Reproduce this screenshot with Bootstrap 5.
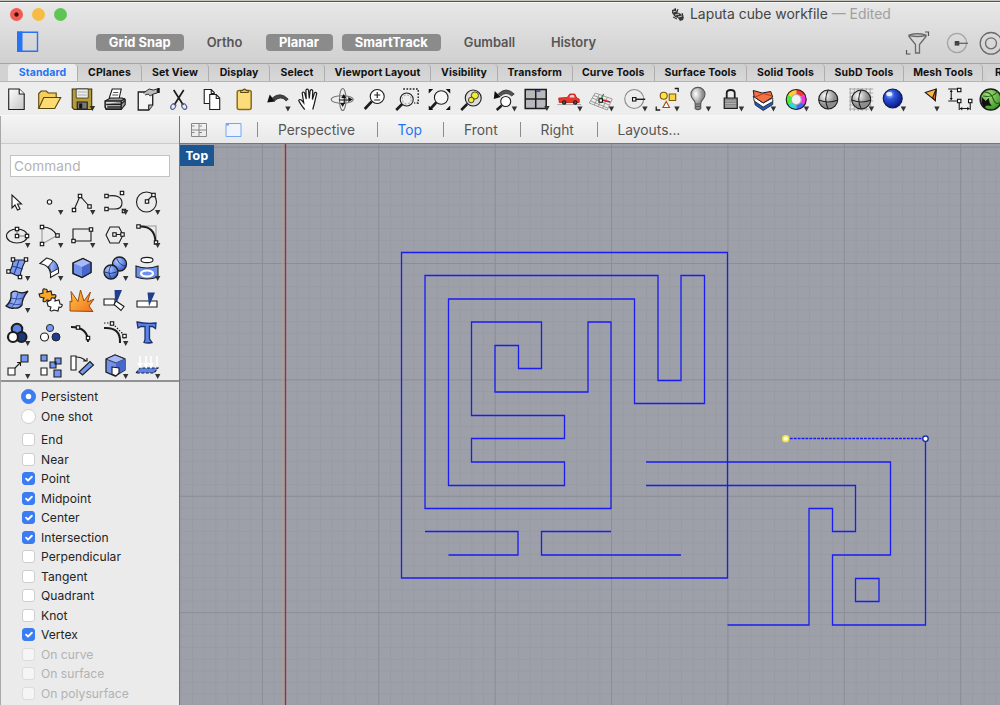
<!DOCTYPE html>
<html lang="en">
<head>
<meta charset="utf-8">
<meta name="viewport" content="width=device-width, initial-scale=1">
<title>Laputa cube workfile</title>
<link rel="stylesheet" href="https://cdn.jsdelivr.net/npm/bootstrap@5.3.0/dist/css/bootstrap.min.css">
<style>
body{font-family:Inter,"Liberation Sans",sans-serif;background:#ebebeb;color:#242424;height:705px;width:1000px}
.topedge{height:3px;background:linear-gradient(#c4c6bd 0 1px,#55574f 1px 2px,#f4f4f4 2px)}
.win-head{height:60px;background:linear-gradient(#e7e7e7,#d0d0d0)}
.win-side{width:650px}
.lights{height:22px;padding-left:9.5px;gap:9px}
.light{width:13px;height:13px;border-radius:50%}
.l-red{background:radial-gradient(#4b0c08 0 1.7px,#ee5c54 2.6px)}
.l-yel{background:#f5bd45}.l-grn{background:#5fc454}
.switches{display:grid;grid-template-columns:79.5px 87.5px 82px 67px 9px 99.5px 97px 71px;height:34px;align-items:center;font-size:12.9px;font-weight:600;color:#565656;text-align:center;padding-left:16.5px;white-space:nowrap}
.switches span{height:17px;line-height:17px}
.switches .lit{background:#8b8b8b;color:#fff;border-radius:4px;font-weight:700}
.titletext{font-size:13.9px;color:#454545;height:23px;padding-left:20px}
.titletext small{font-size:13.9px;color:#a0a0a0}
.tabstrip{height:19px;background:#d2d2d2;border-top:1px solid #a4a4a4;border-bottom:1px solid #b4b4b4;display:grid;grid-template-columns:8px 70px 64px 67px 61px 55px 106px 67px 74.5px 82.5px 92px 78px 79px 79px 40px;overflow:hidden;font-size:10.5px;font-weight:700;letter-spacing:.1px;line-height:17px;color:#111;white-space:nowrap}
.tabstrip a{color:#111;text-decoration:none;text-align:center;border-right:1.5px solid #adadad;border-radius:0 4px 0 0;background:linear-gradient(#cfcfcf,#d8d8d8);height:17px}
.tabstrip a.on{color:#2374f5;background:#ececec;border-radius:4px 4px 0 0;height:18px}
.tools{height:34px;background:#ededed;padding:1.5px 0 0 .3px;overflow:hidden;border-bottom:1px solid #f8f8f8}
.tools>svg,.palette>svg{fill:none;stroke:#1c1c1c;stroke-width:1.1;overflow:visible}
.tools>svg{width:32.45px;height:32px;flex:none}
.main-row{height:589px}
.sidebar{width:180px;border-right:1.5px solid #777;border-left:1px solid #a8a8a8;background:#ebebeb}
.side-head{height:28px;background:linear-gradient(#f4f4f4,#e6e6e6);border-bottom:1px solid #cacaca}
.cmd{margin:11px 9px 0 9px;width:160px;height:22px;border:1px solid #c3c3c3;border-radius:0;font-size:13.6px;padding:0 3px;background:#fff;letter-spacing:.1px}
.cmd::placeholder{color:#b2b2b2;opacity:1}
.palette{display:grid;grid-template-columns:repeat(5,32.5px);grid-auto-rows:32.7px;height:205px;padding-top:9.2px;border-bottom:2px solid #929292;overflow:hidden}
.palette>svg{width:32.5px;height:32.5px}
.snaps{font-size:12.1px;letter-spacing:.02px;line-height:19.5px;padding:5.2px 0 0 20px}
.snaps .row-i{height:19.5px;gap:5px}
.snaps .boxcol{width:15px;display:flex;justify-content:center;flex:none}
.snaps input{float:none;margin:0!important;border:1px solid #cecece;box-shadow:none!important;flex:none;min-height:0}
.snaps input[type=radio]{width:15px;height:15px}
.snaps input[type=radio]:checked{background-size:11px}
.snaps input[type=checkbox]{width:13px;height:13px;border-radius:3px}
.snaps input[type=checkbox]:checked{background-size:12.5px}
.snaps .form-check-input:checked{background-color:#3a7cf2;border-color:#3a7cf2}
.snaps .off{color:#b2b2b2}.snaps .off input{opacity:.5}
.viewnav{height:28px;background:linear-gradient(#f6f6f6,#e8e8e8);border-bottom:1.5px solid #777;display:grid;grid-template-columns:10px 35px 32px 21px 98.500px 21px 45.500px 21px 56px 20.500px 56.500px 20.500px 90px;align-items:center;font-size:13.8px;color:#565656;line-height:26px;white-space:nowrap}
.viewnav i{width:1.3px;height:15px;background:#8d8d8d}
.viewnav .cur{color:#2374f5}
.stage{height:561px;background:#9da0a8}
.stage svg{display:block}
.vp-tag{position:absolute;left:0;top:1px;width:34px;height:21px;font:700 12.8px/21px "Noto Sans",sans-serif;color:#fff;background:#1b5592;text-align:center}
</style>
<script src="https://cdn.jsdelivr.net/npm/bootstrap@5.3.0/dist/js/bootstrap.bundle.min.js"></script>
</head>
<body class="overflow-hidden">
<svg width="0" height="0" class="position-absolute"><defs>
<path id="dd" d="M0 0h5.400L2.700 5z" fill="#333" stroke="none"/>
<rect id="n" x="-1.700" y="-1.700" width="3.400" height="3.400" fill="#fff" stroke="#111" stroke-width="1.100"/>
<radialGradient id="gs" cx=".35" cy=".3"><stop offset="0" stop-color="#fff"/><stop offset="1" stop-color="#8c8c8c"/></radialGradient>
<radialGradient id="bs" cx=".35" cy=".3" r=".7"><stop offset="0" stop-color="#b9ccff"/><stop offset=".35" stop-color="#2f56dd"/><stop offset="1" stop-color="#0a1a80"/></radialGradient>
<radialGradient id="ls" cx=".35" cy=".3" r=".8"><stop offset="0" stop-color="#b5c8fc"/><stop offset=".5" stop-color="#6d8fe6"/><stop offset="1" stop-color="#274bb4"/></radialGradient>
<radialGradient id="gn" cx=".4" cy=".3" r=".8"><stop offset="0" stop-color="#a5e07a"/><stop offset="1" stop-color="#2f8a1a"/></radialGradient>
<linearGradient id="pg" x2="1" y2="1"><stop offset="0" stop-color="#fff"/><stop offset="1" stop-color="#c4c4c4"/></linearGradient>
<linearGradient id="bl" x2="1"><stop offset="0" stop-color="#3c62d2"/><stop offset=".35" stop-color="#9db3f5"/><stop offset="1" stop-color="#4a6fdc"/></linearGradient>
<linearGradient id="fire" y2="1"><stop offset="0" stop-color="#ffc845"/><stop offset="1" stop-color="#ef701f"/></linearGradient>
</defs></svg>

<div class="topedge"></div>
<header class="win-head d-flex">
  <div class="win-side">
    <div class="lights d-flex align-items-center"><span class="light l-red"></span><span class="light l-yel"></span><span class="light l-grn"></span></div>
    <div class="switches">
      <svg width="22" height="22" viewBox="0 0 22 22"><path d="M0 .5h5.500v20.500H0z" fill="#2673f4"/><path d="M.7 1.200h19.800v19H.7z" fill="none" stroke="#2673f4" stroke-width="1.400"/></svg>
      <span class="lit">Grid Snap</span><span>Ortho</span><span class="lit">Planar</span><b></b><span class="lit">SmartTrack</span><span>Gumball</span><span>History</span>
    </div>
  </div>
  <div class="flex-grow-1 overflow-hidden">
    <div class="titletext d-flex align-items-center gap-1">
      <svg width="16" height="16" viewBox="0 0 16 16"><path d="M2 3l3-1 2 3 4 2 3 3-1 3-3 1-2-3-3-1-3-4z" fill="#3a3a3a"/><path d="M3 5l3-1M5 8l4-1M8 10l4-1" stroke="#ccc"/><path d="M5 1l1 3M8 2l-1 3M3 10l4 2M12 6l1 3" stroke="#222"/></svg>
      <span class="text-nowrap">Laputa cube workfile <small>— Edited</small></span>
    </div>
    <svg class="d-block" width="350" height="30" viewBox="650 25 350 30" fill="none" stroke="#6a6a6a" stroke-width="1.300">
      <path d="M909 34q8.500-2.500 17 0v1.500l-6.500 8v8.500h-4v-8.500L909 35.500zM909.500 34.500q8 2 16 0" /><path d="M925 31h3.500v4M906.500 49v4h4" stroke="#555" stroke-width="1.200"/>
      <circle cx="957" cy="42" r="9.600" stroke="#a3a3a3"/><path d="M957 42.300h11" stroke="#666"/><path d="M954.700 40h4.600v4.600h-4.600z" fill="#444" stroke="none"/>
      <circle cx="991" cy="42.300" r="10.800"/><circle cx="991" cy="42.300" r="5.500"/>
    </svg>
  </div>
</header>

<nav class="tabstrip"><span></span><a class="on">Standard</a><a>CPlanes</a><a>Set View</a><a>Display</a><a>Select</a><a>Viewport Layout</a><a>Visibility</a><a>Transform</a><a>Curve Tools</a><a>Surface Tools</a><a>Solid Tools</a><a>SubD Tools</a><a>Mesh Tools</a><a class="text-start ps-2 ms-1">Render</a></nav>

<div class="tools d-flex">
<svg viewBox="0 0 32 32"><path d="M8.500 5h10.500l5 5v15.500H8.500z" fill="url(#pg)"/><path d="M19 5v5h5" fill="#fff"/></svg>
<svg viewBox="0 0 32 32"><path d="M5.500 24V9.500l2.500-2.500h5l2 2h8v4" fill="#f5cf5c" stroke="#5a430b"/><path d="M5.500 24.500l5-11h17l-6 11z" fill="#fbdb72" stroke="#5a430b"/></svg>
<svg viewBox="0 0 32 32"><path d="M7 5h19.500v20.500H9l-2-2z" fill="#b49d38" stroke="#3a3210"/><path d="M11 5h12v9H11z" fill="#eee" stroke-width=".7"/><path d="M12.500 8h9M12.500 11h9" stroke="#aaa"/><path d="M12 18h10v7H12z" fill="#777"/><path d="M14 19.500h3v5h-3z" fill="#111" stroke="none"/><use href="#dd" x="24.500" y="22"/></svg>
<svg viewBox="0 0 32 32"><path d="M11 14l3-9h9l-2 9" fill="#fff"/><path d="M15 8.500h5M14 11h6" stroke="#555"/><path d="M7 17l5-3h12l3 1.500v5l-4 5H8l-1-2z" fill="#999"/><path d="M7 17h16v8H8l-1-2zM23 17l4-2.500M8 20.500h14l5-4M9 23h14" fill="#ddd" stroke-width="1.300"/></svg>
<svg viewBox="0 0 32 32"><path d="M8 8h14.500v13l-4 5H8z" fill="#f4f4f4" stroke-width="1.300"/><path d="M22.500 21h-4v5" fill="#bbb"/><path d="M13 9l6-4 4 1 4-1v4l-4 1-3 2-2-2-3 1" fill="#bbb" stroke-width=".9"/><path d="M27 4h2.500v5H27z" fill="#111" stroke="none"/></svg>
<svg viewBox="0 0 32 32"><path d="M11.500 6l9.500 15M21.500 6L12 21" stroke-width="1.700"/><ellipse cx="11" cy="22.500" rx="2.200" ry="3" stroke="#4c5b95" transform="rotate(35 11 22.500)"/><ellipse cx="22" cy="22.500" rx="2.200" ry="3" stroke="#4c5b95" transform="rotate(-35 22 22.500)"/></svg>
<svg viewBox="0 0 32 32"><path d="M9 5.500h7l3 3v11H9z" fill="#fff"/><path d="M14.500 10.500h6.500l3.500 3.500v11.500h-10z" fill="#fff"/><path d="M21 10.500v4h3.500M16 5.500v4h3"/></svg>
<svg viewBox="0 0 32 32"><rect x="10" y="6.500" width="14" height="19" rx="2" fill="#fbdd7c" stroke="#8c6b16" stroke-width="1.500"/><path d="M13.500 8.500V6.500h2a1.800 1.800 0 013.500 0h2v2z" fill="#e7c45a" stroke="#5c470f"/></svg>
<svg viewBox="0 0 32 32"><path d="M7 18.500l2.500-8 5.500 7z" fill="#111" stroke="none"/><path d="M12 14q8-7 16 1l-2 2q-5-6-12 0z" fill="#444" stroke="#222" stroke-width=".7"/><use href="#dd" x="25" y="22.500"/></svg>
<svg viewBox="0 0 32 32"><path d="M12.500 25.500Q8 20 6.500 16.500q1-2 3 0l2 2.500-1.500-10q1-2 2.500 0l1.500 6-.3-9q1.300-1.800 2.600 0l.7 8.500 1-8q1.300-1.700 2.500 0l-.3 9 2-6.500q1.500-1.500 2.300.5L22 20l-1.500 5.500" fill="#fff" stroke-width="1.200"/></svg>
<svg viewBox="0 0 32 32"><ellipse cx="17" cy="15.500" rx="11" ry="3.800" stroke="#777"/><ellipse cx="17.500" cy="15.500" rx="3.300" ry="11" stroke="#777"/><path d="M14 16h9M19 12v8" stroke="#111"/><path d="M18.500 10l-2.500 4h5zM23 13v5l4.500-2.500zM15 19l2.500 4 2-4z" fill="#111" stroke="none"/></svg>
<svg viewBox="0 0 32 32"><circle cx="20" cy="12.500" r="7" fill="#fff"/><path d="M14.500 17.500L7.500 25" stroke-width="2.600"/><path d="M17 11h6M20 8v6M17 16h6"/></svg>
<svg viewBox="0 0 32 32"><path d="M13 5h15v14h-4" stroke-dasharray="1.700 1.500" stroke-width="1.400"/><circle cx="16.500" cy="15.500" r="6.500" fill="#eee"/><circle cx="16.500" cy="15.500" r="4.500" stroke-dasharray="2 1.500" stroke="#aaa"/><path d="M12 20l-6 6" stroke-width="2.600"/></svg>
<svg viewBox="0 0 32 32"><circle cx="19" cy="13.500" r="6.800" fill="#f6f6f6"/><path d="M14 18.500L8 25" stroke-width="2.600"/><path d="M6.500 9.500V5H11zM28 9.500V5h-4.500zM6.500 21.500V26H11zM28 21.500V26h-4.500z" fill="#111" stroke="none"/></svg>
<svg viewBox="0 0 32 32"><circle cx="19" cy="14" r="8" fill="#ddd"/><path d="M13 20l-6 6" stroke-width="2.600"/><circle cx="20.700" cy="11.500" r="3.600" fill="#f3ea33" stroke-width=".8"/><circle cx="17" cy="16" r="2.800" fill="#f3ea33" stroke-width=".8"/></svg>
<svg viewBox="0 0 32 32"><circle cx="18.500" cy="17.500" r="5" fill="#fff"/><path d="M14.500 21.500L9.500 26" stroke-width="2.400"/><path d="M6.500 15l1-8 6 6z" fill="#111" stroke="none"/><path d="M11 10q8-8 16 0l-2.500 2q-6-5-11 0z" fill="#555" stroke="#222" stroke-width=".7"/><use href="#dd" x="24.500" y="22.500"/></svg>
<svg viewBox="0 0 32 32"><path d="M6 5.500h21v19H6z" fill="#b9b9bd" stroke-width="1.500"/><path d="M16.500 5v20M6 15h21" stroke-width="1.500"/><path d="M17.200 6.300h4v1.500h-4z" fill="#2940a0" stroke="none"/><use href="#dd" x="25" y="22"/></svg>
<svg viewBox="0 0 32 32"><path d="M5 20.500h24" stroke="#aaa"/><path d="M6.500 14l8.500-.5 2.500-3.500h5l2 4 2.500 1v3.500H7z" fill="#ee3328" stroke="#b32018" stroke-width=".8"/><path d="M17 13.500l1.500-2.500h3l1 2.500z" fill="#ddd" stroke="none"/><circle cx="12" cy="18.500" r="1.700" fill="#555"/><circle cx="23" cy="18.500" r="1.700" fill="#555"/><use href="#dd" x="25" y="22.500"/></svg>
<svg viewBox="0 0 32 32"><path d="M11 9l17 6-5 11L5 19zM9.500 11.500l17 6.500M8 14l17 7M6.500 17l17 7M15 10.500L10 21M19 12l-5 10.500M23 13.500L18.500 24" stroke="#888" stroke-width=".8"/><path d="M17 16l9 2" stroke="#d12" stroke-width="1.600"/><path d="M16.500 15l3-5" stroke="#292" stroke-width="1.300"/><use href="#n" x="16.500" y="16.500"/><use href="#dd" x="24.500" y="22.500"/></svg>
<svg viewBox="0 0 32 32"><circle cx="17" cy="15" r="9.500" stroke="#888"/><path d="M17 15.300h11" stroke-width="1.400"/><use href="#n" x="17" y="15.300"/><use href="#dd" x="25" y="22.500"/></svg>
<svg viewBox="0 0 32 32"><circle cx="14.500" cy="11.700" r="3.500" fill="#ffe24a" stroke="#7b5b00"/><path d="M20 10h6.500v6.500H20z" fill="#fcd440" stroke="#7b5b00"/><path d="M17 17.500l3.300 6h-6.600z" fill="#fff" stroke="#a64b10"/><path d="M25.500 4.500H29V8M7 22.500V26h4" stroke-width="1.300"/><use href="#dd" x="25" y="22.500"/></svg>
<svg viewBox="0 0 32 32"><path d="M14 20q0-3-2-4.500a7 7 0 119.500 0q-2 1.500-2 4.500v4.500q-2.700 2.500-5.500 0z" fill="url(#gs)" stroke="#555"/><path d="M14 20h5.500M14 22.500h5.500" stroke="#555"/><use href="#dd" x="24.500" y="22.500"/></svg>
<svg viewBox="0 0 32 32"><path d="M12.500 14V9q0-3 4-3t4 3v5" stroke-width="1.800"/><path d="M10 14h13v10.500H10z" fill="#888" stroke-width="1.200"/><path d="M11 17h11M11 19.500h11M11 22h11" stroke="#bbb" stroke-width=".8"/><use href="#dd" x="24.500" y="22.500"/></svg>
<svg viewBox="0 0 32 32"><path d="M8 16l9 5.500 9.500-5v4L17 26.500 9 21z" fill="#2456c4" stroke-width=".8"/><path d="M7 12l10 7 9.500-5v3.500L17 23l-9-6z" fill="#fff" stroke-width=".8"/><path d="M7 6.500l9 2.500 8.500-1.500 2 5.500-9.500 6-9-6z" fill="#f37145" stroke-width="1"/><path d="M9 13l8-3.500 9 2.500" stroke="#c43d1b"/><use href="#dd" x="24.500" y="22.500"/></svg>
<svg viewBox="0 0 32 32"><g stroke-width="5"><path d="M17 8a7.500 7.500 0 016.500 3.750" stroke="#f33"/><path d="M23.500 11.750a7.500 7.500 0 010 7.500" stroke="#e3d"/><path d="M23.500 19.250A7.500 7.500 0 0117 23" stroke="#46f"/><path d="M17 23a7.500 7.500 0 01-6.500-3.750" stroke="#2dd"/><path d="M10.500 19.250a7.500 7.500 0 010-7.500" stroke="#4e3"/><path d="M10.500 11.750A7.500 7.500 0 0117 8" stroke="#fc3"/></g><circle cx="17" cy="15.500" r="10"/><circle cx="17" cy="15.500" r="5" fill="#f2f2f2" stroke="#aaa"/><use href="#dd" x="24.500" y="22.500"/></svg>
<svg viewBox="0 0 32 32"><circle cx="17" cy="15.500" r="9.500" fill="url(#gs)"/><path d="M17 6q-5 9 0 19M7.500 16q10 4 19 0"/></svg>
<svg viewBox="0 0 32 32"><path d="M6 4v23M10 4v23M14 4v23M18 4v23M22 4v23M26 4v20M5 5h24M5 9h24M5 13h24M5 17h24M5 21h22M5 25h20" stroke="#999" stroke-width=".8"/><circle cx="17" cy="15.500" r="9.500" fill="url(#gs)"/><path d="M17 6q-5 9 0 19M7.500 16q10 4 19 0"/><use href="#dd" x="24.500" y="22.500"/></svg>
<svg viewBox="0 0 32 32"><circle cx="16.500" cy="14.500" r="9.500" fill="url(#bs)" stroke="#0b185e"/><ellipse cx="13" cy="10" rx="3" ry="2" fill="#e6eeff" stroke="none"/><use href="#dd" x="24.500" y="22.500"/></svg>
<svg viewBox="0 0 32 32"><path d="M16 8.500l11-3.500-1 11.500z" fill="#ffb641"/><path d="M23.500 13.500L27 5l-1 11.500z" fill="#ee6b1e"/><use href="#dd" x="25" y="22.500"/></svg>
<svg viewBox="0 0 32 32"><path d="M7 5h11M7 17h11M10 7v8M18 19v7M29 19v7M19 24.500h9" stroke-width="1.100"/><path d="M8.500 8h3L10 5.500zM8.500 14h3L10 16.500zM21 23v3.500L18.500 24.500zM26 23v3.500l2.500-2z" fill="#111" stroke="none"/><use href="#n" x="18" y="6"/><use href="#n" x="18" y="17"/><use href="#n" x="29" y="17"/></svg>
<svg viewBox="0 0 32 32"><circle cx="17.500" cy="15.500" r="10.500" fill="url(#gn)" stroke-width="1.500"/><path d="M11 8q7 0 9 7t8 3M10 12q9 2 15-5" stroke="#235f16"/><path d="M8.500 13l4 4 3-3 1 5 2 3-5-.5-3 2.500-2-5z" fill="#111" stroke="none"/></svg>
</div>

<div class="main-row d-flex">
<aside class="sidebar flex-shrink-0">
  <div class="side-head"></div>
  <input class="cmd form-control" placeholder="Command">
  <div class="palette">
  <svg viewBox="0 0 32.500 32.500"><path d="M11 9v13l3-3 2.500 5 2.500-1-2.500-5h4z" fill="#fff"/></svg>
  <svg viewBox="0 0 32.500 32.500"><circle cx="15.500" cy="16" r="2.200" fill="#fff"/><use href="#dd" x="24" y="24"/></svg>
  <svg viewBox="0 0 32.500 32.500"><path d="M8 24l6-14 9 10"/><use href="#n" x="8" y="24"/><use href="#n" x="14" y="10"/><use href="#n" x="23.500" y="20.500"/><use href="#dd" x="24" y="24"/></svg>
  <svg viewBox="0 0 32.500 32.500"><path d="M8 10q15-2 15 7 0 6-7 6H8"/><use href="#n" x="7.500" y="10"/><use href="#n" x="7.500" y="23"/><use href="#n" x="23" y="7"/><use href="#n" x="25" y="25"/><use href="#dd" x="24" y="24"/></svg>
  <svg viewBox="0 0 32.500 32.500"><circle cx="15.500" cy="16" r="10"/><path d="M16 15l6-6"/><use href="#n" x="16" y="15.500"/><use href="#n" x="22.500" y="9"/><use href="#dd" x="24" y="24"/></svg>

  <svg viewBox="0 0 32.500 32.500"><ellipse cx="16" cy="17" rx="10.500" ry="7"/><path d="M16 10v7h10" stroke="#777"/><use href="#n" x="16" y="10"/><use href="#n" x="16" y="17"/><use href="#n" x="26" y="17"/><use href="#dd" x="24" y="24"/></svg>
  <svg viewBox="0 0 32.500 32.500"><path d="M8 8v17l15-8.500" stroke="#999"/><path d="M8 8q11 0 15 9"/><use href="#n" x="8" y="8"/><use href="#n" x="8" y="25"/><use href="#n" x="23.500" y="16.500"/><use href="#dd" x="24" y="24"/></svg>
  <svg viewBox="0 0 32.500 32.500"><path d="M7 10h18v12H7z"/><use href="#n" x="7.500" y="22"/><use href="#n" x="25" y="10.500"/><use href="#dd" x="24" y="24"/></svg>
  <svg viewBox="0 0 32.500 32.500"><path d="M7 16l4-8h9l4 8-4 8h-9zM16 15.500h7"/><use href="#n" x="15.500" y="15.500"/><use href="#n" x="23.500" y="15.500"/><use href="#dd" x="24" y="24"/></svg>
  <svg viewBox="0 0 32.500 32.500"><path d="M8 7h17v17" stroke="#999"/><path d="M8 7.500q16-1 16.500 16" stroke-width="2"/><use href="#n" x="7.500" y="7.500"/><use href="#n" x="25" y="23.500"/><use href="#dd" x="24" y="24"/></svg>

  <svg viewBox="0 0 32.500 32.500"><path d="M12 8h13q-5 8-6 17L8 20q4-5 4-12z" fill="#7c9cf0"/><path d="M18 8q-2 7-5 14M11 14l11 3" stroke="#223d8d"/><use href="#n" x="12" y="7.500"/><use href="#n" x="25" y="7.500"/><use href="#n" x="7.500" y="19.500"/><use href="#n" x="19" y="25"/><use href="#dd" x="24" y="24"/></svg>
  <svg viewBox="0 0 32.500 32.500"><path d="M6 11.500l6.500-5.500q11 2 12 12v3l-8 4.500q1-12-10.500-14z" fill="#fff"/><path d="M14 15l5.500-6.500q4 3 5 8l-7.500 4q-1-4-3-5.500z" fill="url(#bl)" stroke-width=".9"/><use href="#dd" x="24" y="24"/></svg>
  <svg viewBox="0 0 32.500 32.500"><path d="M7 11l10-4.500 8 4v10l-9 5-9-4z" fill="#7491ea"/><path d="M7 11l9 4 9-4.500-8-4z" fill="#a6bafa" stroke="none"/><path d="M16 15v11l9-5V10.500z" fill="#4767cc" stroke="none"/><path d="M7 11l10-4.500 8 4v10l-9 5-9-4z" stroke-width="1.200"/></svg>
  <svg viewBox="0 0 32.500 32.500"><circle cx="20.500" cy="12" r="7" fill="url(#ls)" stroke-width="1.300"/><circle cx="12" cy="20" r="7" fill="url(#ls)" stroke-width="1.300"/><path d="M12 13.500q-4 6 0 13M5.500 20q6 3 12 0M18 7q3 7 9 7" stroke="#1d3372" stroke-width=".9"/><use href="#dd" x="24" y="24"/></svg>
  <svg viewBox="0 0 32.500 32.500"><ellipse cx="16" cy="8" rx="6" ry="2.600" fill="#fff"/><path d="M5 14q11 4 22 0v11q-11 4-22 0z" fill="#6d90ef"/><ellipse cx="16" cy="21.500" rx="6" ry="3" stroke="#fff" stroke-width="2.200"/><use href="#dd" x="24" y="24"/></svg>

  <svg viewBox="0 0 32.500 32.500"><path d="M5 22q6-5 5-13 3-3 7-1 5 2 10-1-6 7-6 14-3 4-8 3-4 1-8-2z" fill="url(#bl)" stroke-width="1.300"/><path d="M10 14q7 2 13 0M8 19q7 3 13 1M17 9q-2 10-6 14" stroke="#2a4492" stroke-width=".9"/><use href="#dd" x="24" y="24"/></svg>
  <svg viewBox="0 0 32.500 32.500"><path d="M5 10l4-1q-1-5 2-4 3 0 2 3l4-1 1 4q4-1 4 1-1 3-3 2l-2 3-4-1q-2 3-4 1 0-2 1-3l-4-1z" fill="#f8a72b"/><path d="M13 18l4-2q0-3 2-2 3 0 2 3l4-1 1 4q3 0 2 2-1 2-3 1l-1 4-4-1q-3 2-4 0l1-3-3-1z" fill="#fff"/></svg>
  <svg viewBox="0 0 32.500 32.500"><path d="M4 27V17l2 1L5 7.500l7 10L14.500 6l3.500 11 6.500-9-3 10L28 15l-5 7 4 5.500z" fill="url(#fire)" stroke="#8f3c0c" stroke-width=".9"/></svg>
  <svg viewBox="0 0 32.500 32.500"><path d="M5 15h11v6H5z" fill="#fff"/><path d="M17 17l8 5.500-3 4-7-6z" fill="#fff"/><path d="M15.500 6H23l-5 12-2-2z" fill="#223d8d" stroke="none"/></svg>
  <svg viewBox="0 0 32.500 32.500"><path d="M6 17h20v6H6z" fill="#fff"/><path d="M16.500 8.500H24l-6 14z" fill="#223d8d" stroke="none"/></svg>

  <svg viewBox="0 0 32.500 32.500"><circle cx="16" cy="12" r="5.300" fill="#5d83e5" stroke-width="2"/><circle cx="20.500" cy="20" r="5" fill="#1b3777" stroke-width="2"/><circle cx="12" cy="20" r="5" fill="#fff" stroke-width="2.200"/><use href="#dd" x="24" y="24"/></svg>
  <svg viewBox="0 0 32.500 32.500"><circle cx="16" cy="11" r="3.600" fill="#7799f3" stroke-width=".9"/><circle cx="10.500" cy="20" r="4" fill="#fff"/><circle cx="22" cy="20" r="4" fill="#203d8d" stroke-width=".9"/></svg>
  <svg viewBox="0 0 32.500 32.500"><path d="M5 10q17 0 17 15" stroke-width="2"/><use href="#n" x="12" y="10.500"/><use href="#n" x="22" y="21"/></svg>
  <svg viewBox="0 0 32.500 32.500"><path d="M5 11q17-1 16 15" stroke-width="2"/><path d="M5 6h8l12 12v4" stroke-dasharray="1.500 1.500"/><use href="#n" x="13" y="6.500"/><use href="#n" x="25.500" y="19"/><use href="#dd" x="24" y="24"/></svg>
  <svg viewBox="0 0 32.500 32.500"><path d="M6 5q9 2 19 1l-.5 5.500-3-2h-3V22l2.500 3.500q-5 1-8 0l1-3V9.500h-4L7 11z" fill="#5b84e4" stroke="#1d3372" stroke-width="1.300"/></svg>

  <svg viewBox="0 0 32.500 32.500"><path d="M7 18h7v7H7z" fill="#fff"/><path d="M20 5h7v7h-7z" fill="#7298f0"/><path d="M14 18l5-5M16 12.500h3.500V16"/><use href="#dd" x="24" y="24"/></svg>
  <svg viewBox="0 0 32.500 32.500"><path d="M7 5h6v6H7zM21 8h6v6h-6zM16 12h6v6h-6zM20 20h7v7h-7z" fill="#7298f0"/><path d="M7 18h6v7H7z" fill="#fff"/></svg>
  <svg viewBox="0 0 32.500 32.500"><path d="M5 6h5v14H5z" fill="#fff"/><path d="M13 22L24 11.500l3.500 3.500-11 10z" fill="#7298f0"/><path d="M10 7q6 0 10 4M17 11h4V8"/></svg>
  <svg viewBox="0 0 32.500 32.500"><path d="M7 9l9-4 10 4v11l-10 6-9-4z" fill="#7491ea" stroke-width="1.300"/><path d="M7 9l10 4 9-4-10-4z" fill="#a6bafa" stroke-width=".8"/><path d="M17 13v12l9-5V9z" fill="#4767cc" stroke="none"/><path d="M13 17l7 1v5l-3 3-4-2z" fill="#fff"/><use href="#dd" x="24" y="24"/></svg>
  <svg viewBox="0 0 32.500 32.500"><path d="M5 23l4-5h18l-4 5z" fill="#5b84e4" stroke-dasharray="3 1.500"/><path d="M9 6v10M15 6v10M20 6v10M26 6v10M7 13l2 4 2-4M13 13l2 4 2-4M18 13l2 4 2-4" stroke="#fff" stroke-width="1.500"/><use href="#dd" x="24" y="24"/></svg>
  </div>
  <div class="snaps">
    <label class="row-i d-flex align-items-center"><span class="boxcol"><input class="form-check-input" type="radio" name="m" checked></span>Persistent</label>
    <label class="row-i d-flex align-items-center mb-1"><span class="boxcol"><input class="form-check-input" type="radio" name="m"></span>One shot</label>
    <label class="row-i d-flex align-items-center"><span class="boxcol"><input class="form-check-input" type="checkbox"></span>End</label>
    <label class="row-i d-flex align-items-center"><span class="boxcol"><input class="form-check-input" type="checkbox"></span>Near</label>
    <label class="row-i d-flex align-items-center"><span class="boxcol"><input class="form-check-input" type="checkbox" checked></span>Point</label>
    <label class="row-i d-flex align-items-center"><span class="boxcol"><input class="form-check-input" type="checkbox" checked></span>Midpoint</label>
    <label class="row-i d-flex align-items-center"><span class="boxcol"><input class="form-check-input" type="checkbox" checked></span>Center</label>
    <label class="row-i d-flex align-items-center"><span class="boxcol"><input class="form-check-input" type="checkbox" checked></span>Intersection</label>
    <label class="row-i d-flex align-items-center"><span class="boxcol"><input class="form-check-input" type="checkbox"></span>Perpendicular</label>
    <label class="row-i d-flex align-items-center"><span class="boxcol"><input class="form-check-input" type="checkbox"></span>Tangent</label>
    <label class="row-i d-flex align-items-center"><span class="boxcol"><input class="form-check-input" type="checkbox"></span>Quadrant</label>
    <label class="row-i d-flex align-items-center"><span class="boxcol"><input class="form-check-input" type="checkbox"></span>Knot</label>
    <label class="row-i d-flex align-items-center"><span class="boxcol"><input class="form-check-input" type="checkbox" checked></span>Vertex</label>
    <label class="row-i d-flex align-items-center off"><span class="boxcol"><input class="form-check-input" type="checkbox"></span>On curve</label>
    <label class="row-i d-flex align-items-center off"><span class="boxcol"><input class="form-check-input" type="checkbox"></span>On surface</label>
    <label class="row-i d-flex align-items-center off"><span class="boxcol"><input class="form-check-input" type="checkbox"></span>On polysurface</label>
  </div>
</aside>

<main class="flex-grow-1 overflow-hidden">
  <div class="viewnav"><b></b>
    <svg width="18" height="18" viewBox="0 0 18 18" fill="none" stroke="#888" stroke-width="1"><path d="M1.500 2.500h15v13h-15zM9 2.500v13M1.500 9h15M1.500 5h3M9 5h3M1.500 11.500h3M9 11.500h3"/></svg>
    <svg width="18" height="18" viewBox="0 0 18 18"><path d="M1 2.500h15v13H1z" fill="#eef3fc" stroke="#74a7f3"/><path d="M1 2.500h3v2H1z" fill="#74a7f3"/></svg>
    <i></i><span>Perspective</span><i></i><span class="cur">Top</span><i></i><span>Front</span><i></i><span>Right</span><i></i><span>Layouts...</span></div>
  <div class="stage position-relative">
    <svg width="820" height="561" viewBox="180 144 820 561" fill="none">
      <defs>
        <pattern id="minor" x="261.900" y="263" width="11.640" height="11.640" patternUnits="userSpaceOnUse"><path d="M.5 0v11.640M0 .5h11.640" stroke="#989ba3" stroke-width=".9"/></pattern>
        <pattern id="major" x="261.900" y="263" width="116.380" height="116.380" patternUnits="userSpaceOnUse"><path d="M.5 0v116.380M0 .5h116.380" stroke="#8b8e96" stroke-width="1"/></pattern>
      </defs>
      <path d="M180 144h820v561H180z" fill="url(#minor)"/><path d="M180 144h820v561H180z" fill="url(#major)"/>
      <path d="M282.500 144v561" stroke="#a8a294"/><path d="M285.500 144v561" stroke="#b81c3a" stroke-width="1.300"/>
      <g stroke="#1a1df2" stroke-width="1.300">
        <path d="M401.500 252.500h326v325.500h-326z"/>
        <path d="M425 275.500H658V380.500H681V275.500H704.500V403.500H634.500V299H448.500V485.500H564.500V462H471.500V438.500H564.500V415.500H471.500V322H541.500V368.500H518.500V345.500H495V392H588V322H611V508.500H425z"/>
        <path d="M425 531.500H518V555H448.500M611 531.500H541.500V555H681"/>
        <path d="M646 462H890.500V555H832.500V625H925.500V438.500M646 485.500H855.500V531.500H832.500V508.500H809V625H727.500M855.500 578.500H879V601.500H855.500z"/>
        <path d="M786 438.500H925.500" stroke-dasharray="2.800 1.100"/>
      </g>
      <circle cx="785.700" cy="438.700" r="2.900" fill="#fffbe0" stroke="#efe744" stroke-width="1.500"/>
      <circle cx="925.500" cy="438.700" r="2.700" fill="#fff" stroke="#1b35a8" stroke-width="1.400"/>
    </svg>
    <div class="vp-tag">Top</div>
  </div>
</main>
</div>
</body>
</html>
